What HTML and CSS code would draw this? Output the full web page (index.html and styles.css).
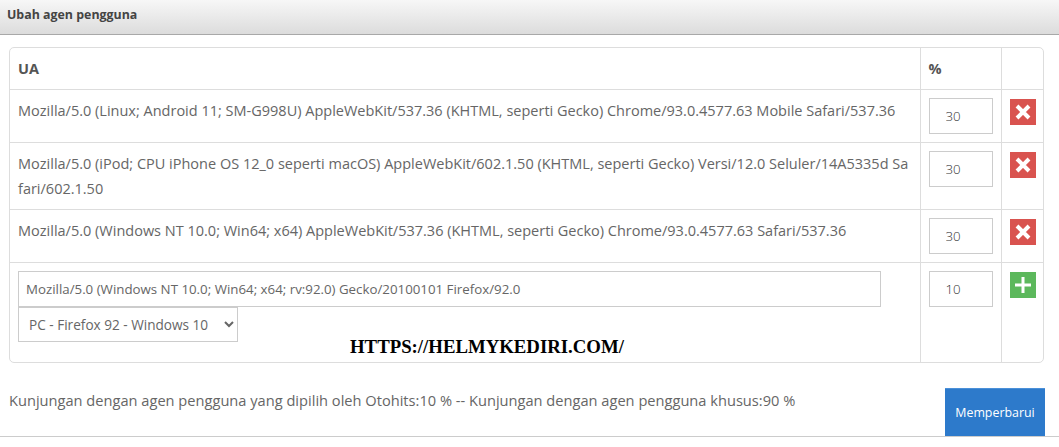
FILE: index.html
```html
<!DOCTYPE html>
<html lang="id">
<head>
<meta charset="utf-8">
<title>Ubah agen pengguna</title>
<link rel="stylesheet" href="styles.css">
</head>
<body>
<div class="panel">
  <header class="panel-head">Ubah agen pengguna</header>
  <div class="panel-body">
    <div class="table-wrap">
      <table class="ua-table">
        <colgroup><col><col class="col-pct"><col class="col-act"></colgroup>
        <thead>
          <tr><th>UA</th><th>%</th><th></th></tr>
        </thead>
        <tbody>
          <tr>
            <td>Mozilla/5.0 (Linux; Android 11; SM-G998U) AppleWebKit/537.36 (KHTML, seperti Gecko) Chrome/93.0.4577.63 Mobile Safari/537.36</td>
            <td><input class="field pct" value="30"></td>
            <td><button class="icon-btn danger" aria-label="Hapus"><svg viewBox="0 0 26 26" width="26" height="26"><path d="M7 7 19 19M19 7 7 19" stroke="#fff" stroke-width="4" fill="none"/></svg></button></td>
          </tr>
          <tr>
            <td>Mozilla/5.0 (iPod; CPU iPhone OS 12_0 seperti macOS) AppleWebKit/602.1.50 (KHTML, seperti Gecko) Versi/12.0 Seluler/14A5335d Safari/602.1.50</td>
            <td><input class="field pct" value="30"></td>
            <td><button class="icon-btn danger" aria-label="Hapus"><svg viewBox="0 0 26 26" width="26" height="26"><path d="M7 7 19 19M19 7 7 19" stroke="#fff" stroke-width="4" fill="none"/></svg></button></td>
          </tr>
          <tr>
            <td>Mozilla/5.0 (Windows NT 10.0; Win64; x64) AppleWebKit/537.36 (KHTML, seperti Gecko) Chrome/93.0.4577.63 Safari/537.36</td>
            <td><input class="field pct" value="30"></td>
            <td><button class="icon-btn danger" aria-label="Hapus"><svg viewBox="0 0 26 26" width="26" height="26"><path d="M7 7 19 19M19 7 7 19" stroke="#fff" stroke-width="4" fill="none"/></svg></button></td>
          </tr>
          <tr class="add-row">
            <td>
              <input class="field ua-input" value="Mozilla/5.0 (Windows NT 10.0; Win64; x64; rv:92.0) Gecko/20100101 Firefox/92.0">
              <select class="field ua-select"><option>PC - Firefox 92 - Windows 10</option></select>
            </td>
            <td><input class="field pct" value="10"></td>
            <td><button class="icon-btn success" aria-label="Tambah"><svg viewBox="0 0 26 26" width="26" height="26"><path d="M13 5V21M5 13H21" stroke="#fff" stroke-width="3" fill="none"/></svg></button></td>
          </tr>
        </tbody>
      </table>
      <div class="watermark">HTTPS://HELMYKEDIRI.COM/</div>
    </div>
    <div class="panel-foot">
      <p class="summary">Kunjungan dengan agen pengguna yang dipilih oleh Otohits:10 % -- Kunjungan dengan agen pengguna khusus:90 %</p>
      <button class="update">Memperbarui</button>
    </div>
  </div>
</div>
</body>
</html>
```
FILE: styles.css
```css
* { box-sizing: border-box; }
html, body { margin: 0; padding: 0; background: #fff; }
body { font-family: "Open Sans", "Liberation Sans", sans-serif; font-size: 14.5px; color: #666; overflow: hidden; }

.panel { width: 1059px; height: 437px; border-bottom: 1px solid #ccc; }
.panel-head {
  height: 35px;
  padding: 6px 7px 0;
  font-size: 12.4px;
  font-weight: 700;
  line-height: 18px;
  color: #444;
  background: linear-gradient(#f7f7f7, #dcdcdc);
  border-bottom: 1px solid #a8a8a8;
}
.panel-body { padding: 12px 15px 0 9px; }

.table-wrap { position: relative; border: 1px solid #ddd; border-radius: 5px; }
.ua-table { width: 100%; border-collapse: collapse; table-layout: fixed; }
.col-pct { width: 81px; }
.col-act { width: 42px; }
.ua-table th, .ua-table td {
  border-left: 1px solid #ddd;
  border-top: 1px solid #ddd;
  padding: 8px;
  vertical-align: top;
  text-align: left;
  line-height: 25px;
}
.ua-table th { border-top: 0; height: 41px; font-weight: 700; color: #555; }
.ua-table th:first-child, .ua-table td:first-child { border-left: 0; word-break: break-all; }
.add-row td { padding-bottom: 20px; }

.field {
  font-family: inherit;
  color: #666;
  background: #fff;
  border: 1px solid #ccc;
  border-radius: 0;
  display: block;
}
.pct { width: 64px; height: 36px; padding: 0 16px; font-size: 13.3px; font-weight: 300; color: #333; }
.ua-input { width: 863px; height: 36px; padding: 0 7px; font-size: 13.3px; }
.ua-select { width: 220px; height: 35px; padding: 0 6px; font-size: 13.6px; }

.icon-btn { display: block; width: 26px; height: 26px; margin-top: 1px; padding: 0; border: 0; }
.icon-btn svg { display: block; }
.danger { background: #d9534f; }
.success { background: #5cb85c; }

.watermark {
  position: absolute;
  left: 340px;
  top: 288px;
  font-family: "Liberation Serif", serif;
  font-size: 18.8px;
  font-weight: 700;
  line-height: 22px;
  color: #000;
  white-space: nowrap;
}

.panel-foot { display: flex; justify-content: space-between; align-items: flex-start; margin: 25px -1px 0 0; }
.summary { margin: 0; padding-top: 1px; line-height: 22px; font-size: 14.64px; }
.update {
  width: 100px;
  height: 48px;
  font-family: inherit;
  font-size: 12.4px;
  color: #fff;
  background: #2d7acb;
  border: 0;
  border-top: 1px solid #4a90d9;
  padding: 0;
}
```
